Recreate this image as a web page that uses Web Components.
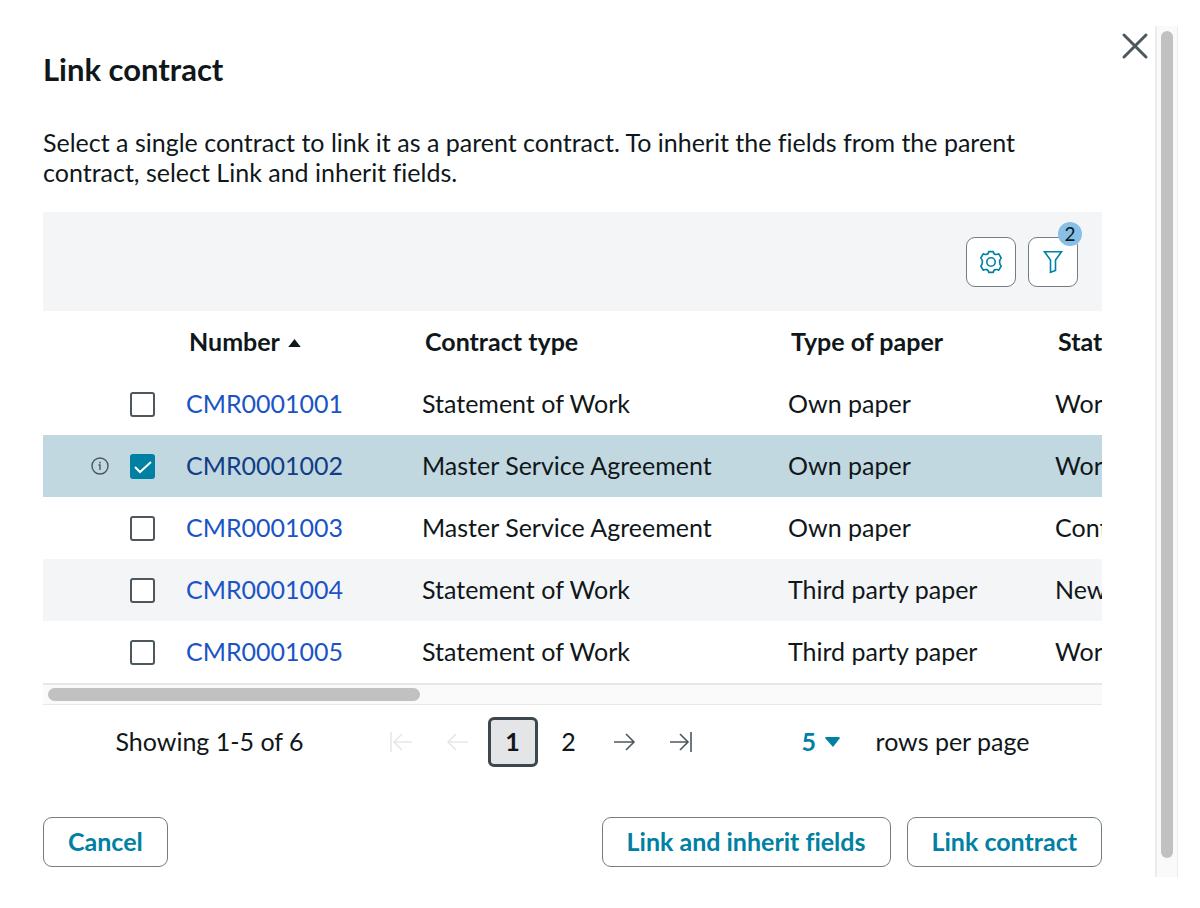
<!DOCTYPE html>
<html lang="en">
<head>
<meta charset="utf-8">
<meta name="viewport" content="width=device-width, initial-scale=1">
<title>Link contract</title>
<style>
  body {
    margin: 0;
    background: white;
    color: #10171a;
    font-family: Lato, "Liberation Sans", sans-serif;
    font-size: 25px;
    font-variant-ligatures: none;
    line-height: 30px;
  }
</style>
</head>
<body>
<link-dialog>
  <span slot="title">Link contract</span>
  <span slot="description">Select a single contract to link it as a parent contract. To inherit the fields from the parent contract, select Link and inherit fields.</span>
  <contract-list></contract-list>
  <list-pager total="6" size="5"></list-pager>
  <action-button slot="cancel">Cancel</action-button>
  <action-button slot="actions">Link and inherit fields</action-button>
  <action-button slot="actions">Link contract</action-button>
</link-dialog>

<script>
class ScrollTrack extends HTMLElement {
  constructor() {
    super();
    this.attachShadow({ mode: 'open' });
    this.shadowRoot.innerHTML = `
      <style>
        :host {
          display: flex;
          box-sizing: border-box;
          background: #fafafa;
        }

        :host([vertical]) {
          width: 23px;
          padding: 5px 4px 19px;
          border-left: 2px solid #ececec;
          border-right: 1px solid #ececec;
        }

        :host([horizontal]) {
          height: 22px;
          padding: 3px 5px;
          border-top: 2px solid #e8e8e8;
          border-bottom: 1px solid #e8e8e8;
        }

        div {
          flex: 1;
          border-radius: 7px;
          background: #c1c1c1;
        }

        :host([horizontal]) div {
          flex: 0 0 auto;
          width: 35.5%;
        }
      </style>
      <div></div>
    `;
  }
}

class ActionButton extends HTMLElement {
  constructor() {
    super();
    this.attachShadow({ mode: 'open' });
    this.shadowRoot.innerHTML = `
      <style>
        :host {
          display: block;
        }

        button {
          display: block;
          height: 50px;
          padding: 0 24px 3px;
          border: 1px solid #737d82;
          border-radius: 9px;
          background: white;
          color: #0080a3;
          font: inherit;
          font-weight: bold;
          font-variant-ligatures: none;
          white-space: nowrap;
          cursor: pointer;
        }
      </style>
      <button type="button"><slot></slot></button>
    `;
  }
}

class ToolButton extends HTMLElement {
  constructor() {
    super();
    this.attachShadow({ mode: 'open' });
    const badge = this.getAttribute('badge');
    this.shadowRoot.innerHTML = `
      <style>
        :host {
          display: block;
          position: relative;
        }

        button {
          display: flex;
          align-items: center;
          justify-content: center;
          width: 50px;
          height: 50px;
          padding: 0;
          border: 1px solid #737d82;
          border-radius: 9px;
          background: white;
          color: #0080a3;
          cursor: pointer;
        }

        #badge {
          position: absolute;
          top: -15px;
          right: -4px;
          width: 24px;
          height: 24px;
          border-radius: 50%;
          background: #86bfe8;
          font-size: 19px;
          line-height: 24px;
          text-align: center;
        }
      </style>
      <button type="button" aria-label="${this.getAttribute('label')}"><slot></slot></button>
      ${badge ? `<span id="badge">${badge}</span>` : ''}
    `;
  }
}

class LinkDialog extends HTMLElement {
  constructor() {
    super();
    this.attachShadow({ mode: 'open' });
    this.shadowRoot.innerHTML = `
      <style>
        :host {
          display: flex;
          padding: 26px 22px 31px 43px;
        }

        #dialog {
          flex: 1;
          min-width: 0;
          display: grid;
          grid-template-columns: minmax(0, 1fr) 53px;
          padding-bottom: 10px;
        }

        h1 {
          margin: 23px 0 38px;
          font-size: 31px;
          line-height: 40px;
        }

        p {
          margin: 0 0 25px;
        }

        #close {
          justify-self: end;
          display: flex;
          align-items: center;
          justify-content: center;
          width: 40px;
          height: 40px;
          padding: 0;
          border: none;
          background: none;
          color: #4c585d;
          cursor: pointer;
        }

        section {
          grid-column: 1;
          min-width: 0;
        }

        footer {
          grid-column: 1;
          display: flex;
          gap: 16px;
          margin-top: 50px;
        }

        slot[name="cancel"] {
          display: block;
          margin-right: auto;
        }
      </style>
      <div id="dialog" role="dialog" aria-labelledby="title">
        <h1 id="title"><slot name="title"></slot></h1>
        <button id="close" type="button" aria-label="Close">
          <svg width="28" height="28" viewBox="0 0 28 28" fill="none" stroke="currentColor" stroke-width="3" stroke-linecap="round"><path d="M3 3l22 22M25 3L3 25"/></svg>
        </button>
        <section>
          <p><slot name="description"></slot></p>
          <slot></slot>
        </section>
        <footer>
          <slot name="cancel"></slot>
          <slot name="actions"></slot>
        </footer>
      </div>
      <scroll-track vertical></scroll-track>
    `;
  }
}

const contracts = [
  { number: 'CMR0001001', type: 'Statement of Work', paper: 'Own paper', state: 'Wor' },
  { number: 'CMR0001002', type: 'Master Service Agreement', paper: 'Own paper', state: 'Wor', selected: true },
  { number: 'CMR0001003', type: 'Master Service Agreement', paper: 'Own paper', state: 'Cont' },
  { number: 'CMR0001004', type: 'Statement of Work', paper: 'Third party paper', state: 'New' },
  { number: 'CMR0001005', type: 'Statement of Work', paper: 'Third party paper', state: 'Wor' },
];

class ContractList extends HTMLElement {
  constructor() {
    super();
    this.attachShadow({ mode: 'open' });
    this.shadowRoot.innerHTML = `
      <style>
        :host {
          display: block;
        }

        #toolbar {
          display: flex;
          justify-content: flex-end;
          gap: 12px;
          padding: 25px 24px 24px;
          background: #f4f5f7;
        }

        #viewport {
          overflow: hidden;
        }

        table {
          width: 1158px;
          table-layout: fixed;
          border-collapse: collapse;
        }

        th, td {
          height: 62px;
          box-sizing: border-box;
          padding: 0 0 3px 15px;
          text-align: left;
          white-space: nowrap;
        }

        th {
          padding-left: 18px;
        }

        .info, .check {
          padding: 0;
          text-align: center;
        }

        .info {
          padding-left: 42px;
        }

        .info svg {
          display: block;
          margin: auto;
        }

        tbody tr:nth-child(even) {
          background: #f4f5f7;
        }

        tbody tr.selected {
          background: #c2d8e0;
        }

        a {
          color: #1b54c4;
          text-decoration: none;
        }

        .selected a {
          color: #113c86;
        }

        input {
          appearance: none;
          display: block;
          width: 25px;
          height: 25px;
          margin: auto;
          border: 2px solid #4c585d;
          border-radius: 3px;
          background: white;
        }

        input:checked {
          border-color: #0080a3;
          background: #0080a3 url("data:image/svg+xml,%3Csvg xmlns='http://www.w3.org/2000/svg' viewBox='0 0 22 22' fill='none' stroke='white' stroke-width='2'%3E%3Cpath d='M3 12l5 5L19 7'/%3E%3C/svg%3E") center / 22px no-repeat;
        }

        .sort {
          margin-left: 3px;
          vertical-align: 4px;
        }
      </style>
      <div id="toolbar">
        <tool-button label="Settings">
          <svg width="24" height="24" viewBox="0 0 24 24" fill="none" stroke="currentColor" stroke-width="1.6" stroke-linejoin="round"><path d="M9.700 1.600h4.600q.3 2.600 2.200 2.800t3.300-.6l2.400 4.200q-1.600 1.600-1.600 4t1.600 4l-2.400 4.200q-1.400-.8-3.300-.6t-2.200 2.800H9.700q-.3-2.600-2.200-2.800t-3.300.6L1.800 16q1.600-1.600 1.600-4T1.800 8l2.400-4.200q1.400.8 3.300.6t2.200-2.800z"/><circle cx="12" cy="12" r="4.200"/></svg>
        </tool-button>
        <tool-button label="Filter" badge="2">
          <svg width="24" height="24" viewBox="0 0 24 24" fill="none" stroke="currentColor" stroke-width="1.6"><path d="M3.500 1.800h17l-6 8.200v10.500l-5 1.800V10z"/></svg>
        </tool-button>
      </div>
      <div id="viewport">
        <table>
          <colgroup>
            <col style="width: 71px">
            <col style="width: 57px">
            <col style="width: 236px">
            <col style="width: 366px">
            <col style="width: 267px">
            <col>
          </colgroup>
          <thead>
            <tr>
              <th></th>
              <th></th>
              <th scope="col" aria-sort="ascending">Number <svg class="sort" width="13" height="8" viewBox="0 0 14 9"><path d="M7 0l7 9H0z" fill="currentColor"/></svg></th>
              <th scope="col">Contract type</th>
              <th scope="col">Type of paper</th>
              <th scope="col">Stat</th>
            </tr>
          </thead>
          <tbody>${contracts.map(row => this.renderRow(row)).join('')}</tbody>
        </table>
      </div>
      <scroll-track horizontal></scroll-track>
    `;

    // only one parent contract can be picked at a time
    const boxes = this.shadowRoot.querySelectorAll('input');
    boxes.forEach(box => box.addEventListener('change', () => {
      boxes.forEach(other => {
        if (other !== box) {
          other.checked = false;
        }
        other.closest('tr').classList.toggle('selected', other.checked);
      });
    }));
  }

  renderRow(row) {
    const info = `
      <svg width="18" height="18" viewBox="0 0 18 18" fill="none" stroke="#4c585d" stroke-width="1.4"><circle cx="9" cy="9" r="8"/><path d="M7.500 8H9v5M9 4.800v1.600"/></svg>
    `;
    return `
      <tr class="${row.selected ? 'selected' : ''}">
        <td class="info">${row.selected ? info : ''}</td>
        <td class="check"><input type="checkbox" aria-label="Select ${row.number}" ${row.selected ? 'checked' : ''}></td>
        <td><a href="#${row.number}">${row.number}</a></td>
        <td>${row.type}</td>
        <td>${row.paper}</td>
        <td>${row.state}</td>
      </tr>
    `;
  }
}

class ListPager extends HTMLElement {
  constructor() {
    super();
    this.attachShadow({ mode: 'open' });
    const total = this.getAttribute('total');
    const size = this.getAttribute('size');
    this.shadowRoot.innerHTML = `
      <style>
        :host {
          display: flex;
          align-items: center;
          justify-content: center;
          padding-top: 12px;
          white-space: nowrap;
        }

        .text {
          padding-bottom: 2px;
        }

        nav {
          display: flex;
          gap: 6px;
          margin: 0 96px 0 72px;
        }

        button {
          display: flex;
          align-items: center;
          justify-content: center;
          width: 50px;
          height: 50px;
          padding: 0;
          border: none;
          border-radius: 6px;
          background: none;
          color: #4c585d;
          font: inherit;
        }

        button:disabled {
          color: #e6e7e8;
        }

        .page {
          padding-bottom: 2px;
          color: inherit;
        }

        .page[aria-current] {
          border: 3px solid #3c484d;
          background: #e4e5e7;
          font-weight: bold;
        }

        svg {
          fill: none;
          stroke: currentColor;
          stroke-width: 1.6;
        }

        #size {
          display: grid;
          align-items: center;
          margin-right: 36px;
          color: #0080a3;
        }

        #size > * {
          grid-area: 1 / 1;
        }

        #size svg {
          justify-self: end;
          fill: currentColor;
          stroke: none;
          pointer-events: none;
        }

        select {
          appearance: none;
          width: 38px;
          padding: 0 0 2px;
          border: none;
          background: none;
          color: inherit;
          font: inherit;
          font-weight: bold;
        }
      </style>
      <span class="text">Showing 1-${size} of ${total}</span>
      <nav aria-label="Pages">
        <button type="button" aria-label="First page" disabled>
          <svg width="22" height="20" viewBox="0 0 22 20"><path d="M1 0v20M22 10H4M12 2l-8 8 8 8"/></svg>
        </button>
        <button type="button" aria-label="Previous page" disabled>
          <svg width="22" height="20" viewBox="0 0 22 20"><path d="M22 10H2M10 2l-8 8 8 8"/></svg>
        </button>
        <button type="button" class="page" aria-current="page">1</button>
        <button type="button" class="page">2</button>
        <button type="button" aria-label="Next page">
          <svg width="22" height="20" viewBox="0 0 22 20"><path d="M0 10h20M12 2l8 8-8 8"/></svg>
        </button>
        <button type="button" aria-label="Last page">
          <svg width="22" height="20" viewBox="0 0 22 20"><path d="M21 0v20M0 10h18M10 2l8 8-8 8"/></svg>
        </button>
      </nav>
      <span id="size">
        <select id="rows"><option>${size}</option></select>
        <svg width="15" height="10" viewBox="0 0 15 10"><path d="M1 0h13l1 1-7 9L0 1z"/></svg>
      </span>
      <label class="text" for="rows">rows per page</label>
    `;
  }
}

customElements.define('scroll-track', ScrollTrack);
customElements.define('action-button', ActionButton);
customElements.define('tool-button', ToolButton);
customElements.define('link-dialog', LinkDialog);
customElements.define('contract-list', ContractList);
customElements.define('list-pager', ListPager);
</script>
</body>
</html>
